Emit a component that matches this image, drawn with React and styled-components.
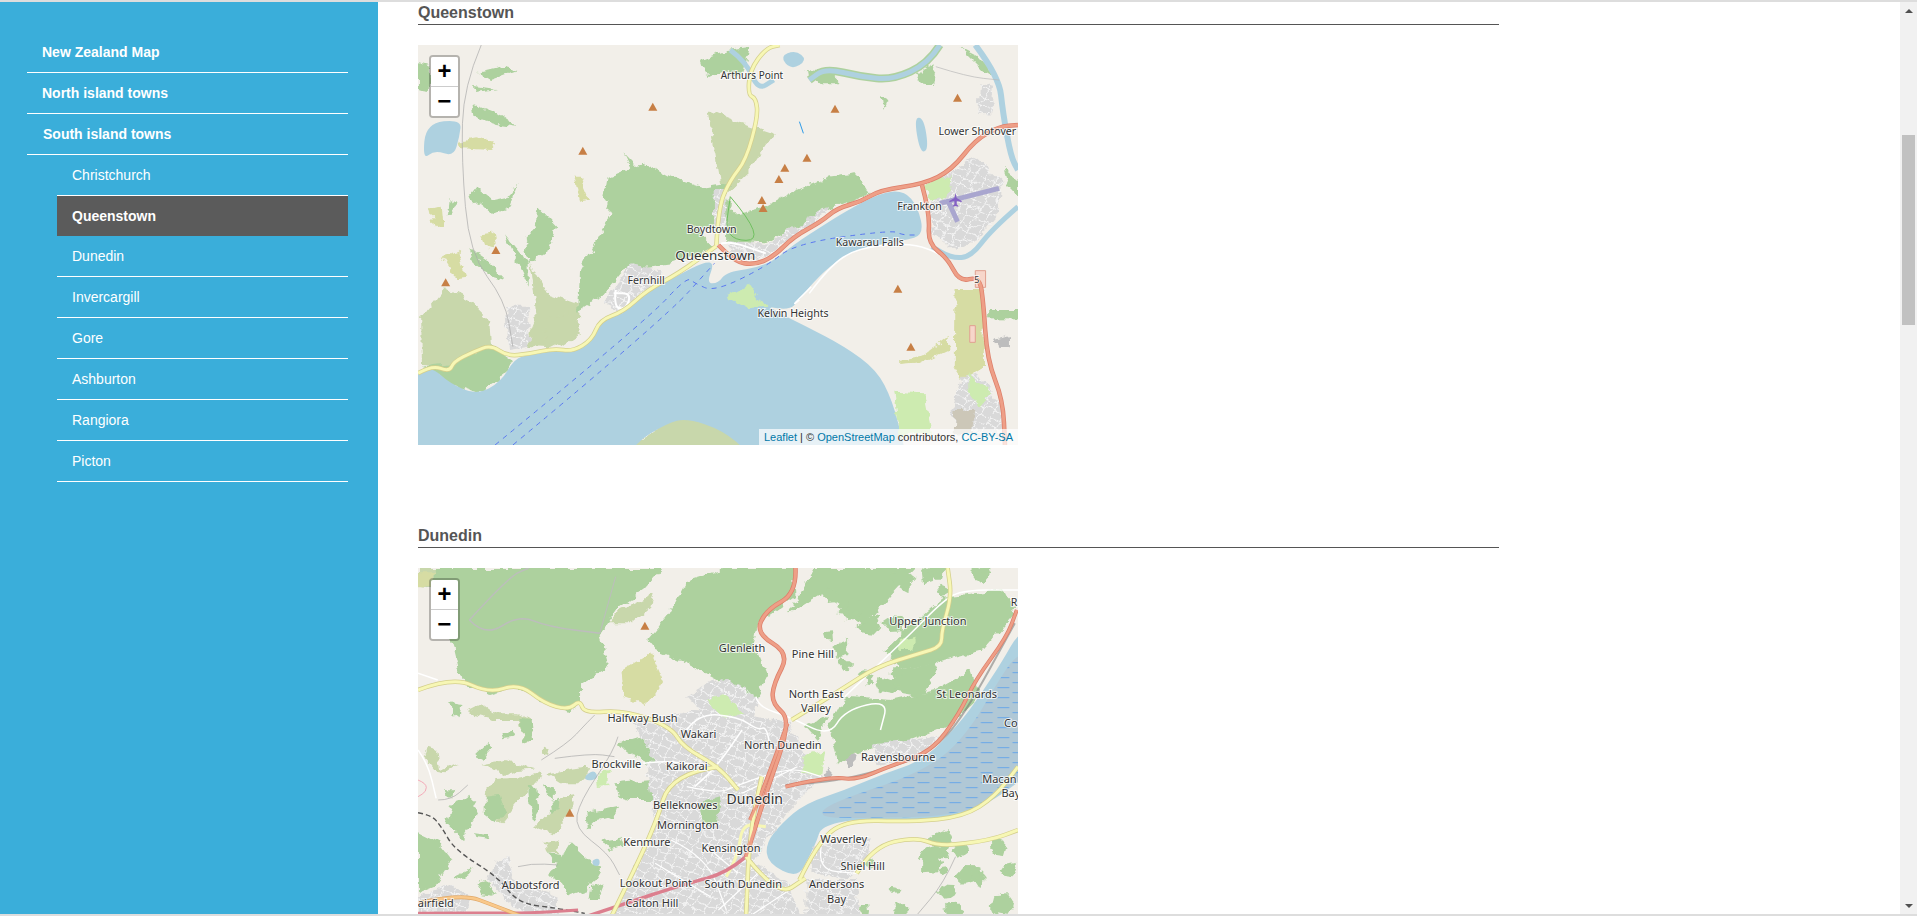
import React from 'react';
import styled, { createGlobalStyle } from 'styled-components';

const GlobalStyle = createGlobalStyle`
    html, body { margin: 0; padding: 0; height: 100%; overflow: hidden; background: #fff; }
    body { font-family: "Liberation Sans", Arial, sans-serif; }
`;

const Page = styled.div`
    display: flex;
    height: 916px;
    box-sizing: border-box;
    border-top: 2px solid #ddd;
    border-bottom: 2px solid #ddd;
    overflow: hidden;
`;

const Sidebar = styled.nav`
    flex: 0 0 378px;
    background: #3aaeda;
    padding: 30px 30px 0 27px;
    box-sizing: border-box;
`;

const SideList = styled.ul`
    list-style: none;
    margin: 0;
    padding: ${p => (p.$sub ? '0 0 0 30px' : '0')};
`;

const SideLink = styled.a`
    display: block;
    height: ${p => (p.$active ? 40 : 41)}px;
    box-sizing: border-box;
    padding-left: ${p => p.$indent || 15}px;
    line-height: 40px;
    font-size: 14px;
    font-weight: ${p => (p.$bold ? 700 : 400)};
    color: #fff;
    background: ${p => (p.$active ? '#5b5b5b' : 'transparent')};
    border-bottom: ${p => (p.$active ? 'none' : '1px solid #fff')};
`;

const Main = styled.main`
    flex: 1;
    min-width: 0;
    padding-left: 40px;
    overflow: hidden;
`;

const Section = styled.section`
    width: 1081px;
    margin-bottom: 80px;
`;

const Title = styled.h2`
    margin: 0 0 20px;
    height: 22px;
    line-height: 21px;
    font-size: 16px;
    font-weight: 700;
    color: #555;
    border-bottom: 1px solid #555;
`;

const MapFrame = styled.div`
    position: relative;
    width: 600px;
    height: 400px;
    overflow: hidden;
    background: #f2efe9;
    svg { position: absolute; left: 0; top: 0; display: block; }
`;

const ZoomBox = styled.div`
    position: absolute;
    left: 11px;
    top: 10px;
    width: 27px;
    border: 2px solid rgba(0, 0, 0, 0.25);
    border-radius: 4px;
    background-clip: padding-box;
`;

const ZoomButton = styled.a`
    display: block;
    height: ${p => (p.$last ? 29 : 30)}px;
    box-sizing: border-box;
    background: #fff;
    color: #000;
    text-align: center;
    font: 700 24px/31px "Liberation Mono", monospace;
    overflow: hidden;
    border-bottom: ${p => (p.$last ? 'none' : '1px solid #ccc')};
    border-radius: ${p => (p.$last ? '0 0 2px 2px' : '2px 2px 0 0')};
`;

const Attribution = styled.div`
    position: absolute;
    right: 0;
    bottom: 0;
    height: 16px;
    padding: 0 5px;
    background: rgba(255, 255, 255, 0.7);
    font-size: 11px;
    line-height: 16px;
    color: #333;
    white-space: nowrap;
    a { color: #0078a8; }
`;

const Scrollbar = styled.div`
    flex: 0 0 17px;
    display: flex;
    flex-direction: column;
    align-items: center;
    background: #f1f1f1;
`;

const ArrowButton = styled.div`
    flex: 0 0 17px;
    display: flex;
    align-items: center;
    justify-content: center;
    margin-top: ${p => (p.$down ? 'auto' : '0')};
    &::before {
        content: "";
        border-left: 4px solid transparent;
        border-right: 4px solid transparent;
        ${p => (p.$down ? 'border-top: 4px solid #505050;' : 'border-bottom: 4px solid #505050;')}
    }
`;

const Thumb = styled.div`
    width: 13px;
    height: 190px;
    margin-top: 116px;
    background: #c1c1c1;
`;

const C = {
    forest: '#add19e',
    scrub: '#c8d7ab',
    tan: '#d6dca3',
    grass: '#cdebb0',
    water: '#aed1e0',
    town: 'url(#streets)',
    road: '#f7f7b5',
    trunk: '#ee9f87',
    trunkDark: '#dd7f6a',
    pink: '#dc7f8e',
};

// crop coordinates of the lower left corner of the Dunedin tile to map units
const cr = str => str.trim().split(/\s+/).map(s => {
    const [x, y] = s.split(',').map(Number);
    return `${Math.round(20 + x * 0.843)},${570 + y}`;
}).join(' ');

// scattered woodland blobs, seeded so every render is the same
function patches(seed, count, x0, y0, x1, y1, fill) {
    let s = seed;
    const rnd = () => {
        s = (s * 16807) % 2147483647;
        return s / 2147483647;
    };
    const out = [];
    for (let i = 0; i < count; i++) {
        const cx = x0 + rnd() * (x1 - x0);
        const cy = y0 + rnd() * (y1 - y0);
        const r = 8 + rnd() * 22;
        const pts = [];
        for (let a = 0; a < 6; a++) {
            const k = 0.6 + rnd() * 0.8;
            const t = (a / 6) * Math.PI * 2;
            pts.push(`${Math.round(cx + Math.cos(t) * r * k)},${Math.round(cy + Math.sin(t) * r * k)}`);
        }
        out.push([fill, pts.join(' ')]);
    }
    return out;
}

function pathFrom(str, closed, curved) {
    const pts = str.trim().split(/\s+/).map(s => s.split(',').map(Number));
    if (closed && !curved) return `M${pts.join(' L')} Z`;
    if (!closed) {
        let d = `M${pts[0]}`;
        for (let i = 1; i < pts.length - 1; i++) {
            const mx = (pts[i][0] + pts[i + 1][0]) / 2;
            const my = (pts[i][1] + pts[i + 1][1]) / 2;
            d += ` Q${pts[i]} ${mx},${my}`;
        }
        return d + ` L${pts[pts.length - 1]}`;
    }
    const n = pts.length;
    const mid = i => [(pts[i % n][0] + pts[(i + 1) % n][0]) / 2, (pts[i % n][1] + pts[(i + 1) % n][1]) / 2];
    let d = `M${mid(0)}`;
    for (let i = 1; i <= n; i++) d += ` Q${pts[i % n]} ${mid(i)}`;
    return d + ' Z';
}

const queenstown = {
    box: [20, 135],
    areas: [
        [C.tan, '1380,870 1450,870 1452,1100 1400,1140 1378,1100'],
        [C.scrub, '30,1095 28,950 90,862 150,900 200,960 205,1040 240,1060 100,1100'],
        [C.scrub, '305,790 345,880 430,915 425,1000 350,1045 290,1040 320,950'],
        [C.tan, '80,770 125,755 145,830 115,835'],
        [C.tan, '182,700 210,695 218,745 195,740'],
        [C.tan, '50,625 80,620 85,680 62,685'],
        [C.tan, '415,530 430,530 455,600 430,605'],
        [C.tan, '125,425 170,415 215,430 205,450 130,445'],
        [C.tan, '1240,1080 1300,1065 1360,1010 1362,1050 1290,1090 1240,1095'],
        [C.scrub, '755,330 830,365 920,400 860,510 790,590 770,450'],
        [C.scrub, '345,950 400,940 430,1000 380,1040 340,1010'],
        [C.scrub, '500,1400 650,1262 700,1248 810,1285 900,1400'],
        [C.forest, '540,460 585,570 640,610 680,680 770,680 780,590 812,545 740,560 660,530 590,485 500,530 490,600 510,640 480,700 430,810 425,935 490,885 540,810 660,790 770,745'],
        [C.forest, '795,590 830,640 900,620 960,580 1060,530 1130,520 1160,580 1100,610 1040,640 960,690 900,730 800,725'],
        [C.forest, '150,590 170,560 210,600 250,590 272,548 250,625 210,645 170,610'],
        [C.forest, '325,620 372,680 350,750 300,790 290,720 320,680'],
        [C.forest, '240,700 300,790 300,860 270,780'],
        [C.forest, '150,750 200,790 240,840 210,830 160,790'],
        [C.forest, '155,310 220,340 270,380 220,372 160,350'],
        [C.forest, '170,220 240,200 272,210 200,240'],
        [C.forest, '160,258 220,268 160,276'],
        [C.forest, '735,180 800,150 860,140 840,232 790,210 750,232'],
        [C.forest, '20,190 50,200 50,270 20,265'],
        [C.forest, '100,600 120,610 95,650'],
        [C.forest, '1195,290 1210,300 1200,330'],
        [C.forest, '1500,500 1538,540 1538,590 1515,560'],
        [C.forest, '1460,930 1538,930 1538,955 1460,955'],
        [C.forest, '1000,210 1060,215 1090,250 1040,250'],
        [C.forest, '1280,220 1330,190 1320,255 1295,250'],
        [C.forest, '1390,140 1440,170 1490,240 1450,210'],
        [C.forest, '30,1100 100,1150 170,1180 230,1140 260,1080 205,1035 160,1060 110,1090 60,1095'],
        [C.water, '-100,1130 20,1125 55,1100 100,1150 170,1185 230,1145 265,1075 300,1065 365,1050 410,1060 460,1025 480,965 540,940 600,875 680,825 745,785 770,790 750,850 780,850 800,815 900,800 975,730 1040,680 1100,635 1190,578 1250,572 1285,620 1300,705 1250,722 1130,745 1060,800 1010,860 985,900 960,930 900,920 800,890 860,850 900,920 1000,978 1100,1040 1180,1110 1220,1200 1250,1340 1270,1450 870,1450 860,1360 790,1290 700,1255 650,1270 560,1335 530,1450 -100,1450'],
        [C.grass, '800,890 860,850 900,920 850,925'],
        [C.water, '32,480 40,370 130,358 125,410 110,470 62,450'],
        [C.water, '1275,352 1300,355 1312,450 1290,458'],
        [C.water, '935,170 975,150 1005,180 965,210'],
        [C.town, '768,570 800,570 800,700 770,700'],
        [C.town, '490,910 560,790 600,800 640,815 600,860 540,935'],
        [C.town, '800,720 900,735 1000,660 1060,620 1055,640 980,700 900,775 820,780'],
        [C.town, '1310,560 1430,470 1500,550 1490,640 1430,720 1380,750 1320,700'],
        [C.town, '1440,250 1480,260 1470,340 1435,345'],
        [C.town, '240,920 300,920 300,1040 250,1050'],
        [C.town, '1400,1130 1440,1120 1500,1230 1490,1320 1380,1300 1370,1230'],
        [C.grass, '1305,550 1370,525 1365,590 1315,600'],
        [C.grass, '1225,1175 1300,1180 1320,1300 1240,1310'],
        [C.grass, '1410,1120 1470,1180 1440,1220 1410,1170'],
        ['#ccc7b8', '1380,1230 1430,1230 1420,1295 1375,1300'],
        ['#bdbdbd', '1480,1020 1515,1008 1515,1042 1490,1040'],
    ],
    lines: [
        { c: C.forest, w: 8, p: '1340,135 1312,190 1220,240 1140,230 1050,205 1010,240' },
        { c: C.water, w: 5, p: '1340,135 1312,190 1220,240 1140,230 1050,205 1010,240' },
        { c: C.water, w: 6, p: '1430,135 1490,230 1500,340 1520,470 1538,510' },
        { c: C.water, w: 5, p: '1538,620 1470,690 1420,770 1370,775 1320,740' },
        { c: C.water, w: 5, p: '810,150 850,185 880,270 920,240' },
        { c: '#fff', w: 1.5, p: '1010,880 1060,800 1130,745 1250,730 1310,745 1350,770' },
        { c: '#fff', w: 2, p: '520,870 515,920 545,930 560,880 515,880' },
        { c: '#fff', w: 1.5, p: '985,900 960,925 1015,860' },
        { c: '#fff', w: 2, p: '780,735 800,720 900,760' },
        { c: '#aaa', w: 0.7, p: '180,135 135,260 130,480 150,760 240,900 260,1040' },
        { c: '#b9b9b9', w: 0.7, p: '1330,200 1410,230 1490,240' },
        { c: '#a9a6cf', w: 5, p: '1340,610 1490,565' },
        { c: '#a9a6cf', w: 5, p: '1360,600 1385,665' },
        { c: '#70c060', w: 1, p: '810,590 905,722 795,720 810,590' },
        { c: '#2e9be8', w: 1, p: '985,365 995,400' },
        { c: C.road, w: 3.5, casing: '#d4cf8c', p: '20,1120 55,1095 100,1115 110,1085 160,1055 205,1035 245,1068 300,1062 365,1045 410,1055 460,1020 480,960 540,935 600,870 680,820 775,738' },
        { c: C.road, w: 3.5, casing: '#d4cf8c', p: '775,735 780,620 810,540 850,480 880,350 875,295 855,285 860,210 900,145 935,135' },
        { c: C.trunk, w: 3.5, casing: C.trunkDark, p: '780,735 820,785 870,795 920,770 970,710 1040,665 1080,625 1140,605 1190,570 1300,552 1370,510 1430,420 1490,380 1538,375' },
        { c: C.trunk, w: 3.5, casing: C.trunkDark, p: '1295,555 1315,640 1310,730 1360,775 1390,845 1440,830 1450,900 1460,1080 1500,1200 1505,1335' },
        { c: '#5a78f0', w: 1, dash: '5 5', p: '215,1335 600,960 700,830 720,850 770,875 900,800 975,730 1220,690 1245,705 1285,705' },
        { c: '#5a78f0', w: 1, dash: '5 5', p: '260,1335 640,960 770,790' },
    ],
    rects: [
        ['#f7d6ca', 1430, 812, 26, 50],
        ['#f7d6ca', 1416, 977, 14, 50],
    ],
    peaks: ['614,320', '1075,326', '1385,293', '437,452', '1004,473', '948,503', '933,537', '890,600', '893,624', '217,750', '90,847', '1234,866', '1267,1040'],
    plane: '1380,600',
    labels: [
        ['Arthurs Point', 865, 227, 10],
        ['Lower Shotover', 1435, 394],
        ['Boydtown', 763, 688],
        ['Queenstown', 772, 766, 13.4],
        ['Fernhill', 597, 842],
        ['Frankton', 1289, 620],
        ['Kawarau Falls', 1163, 728],
        ['Kelvin Heights', 969, 941],
        ['5', 1434, 838, 9],
    ],
};

const dunedin = {
    box: [20, 174],
    areas: [
        [C.scrub, '20,174 130,174 60,240 20,230'],
        [C.tan, '20,190 60,190 50,230 20,232'],
        [C.forest, '60,174 300,174 640,174 590,240 520,300 480,370 505,470 430,520 430,585 400,605 320,570 270,530 200,555 130,510 112,420 60,240'],
        [C.scrub, '530,300 620,250 610,290 560,340 500,340'],
        [C.tan, '535,480 610,430 640,510 600,585 540,560'],
        [C.forest, '700,210 800,174 970,174 975,260 880,340 870,400 905,500 880,560 780,510 700,460 620,420 600,390 650,320'],
        [C.forest, '1020,174 1280,174 1220,250 1150,350 1100,300 1040,250 960,310'],
        [C.forest, '1350,260 1500,240 1530,310 1450,420 1350,450 1240,480 1200,420 1260,350'],
        [C.forest, '1100,560 1220,570 1330,540 1420,480 1440,560 1370,640 1270,690 1150,720 1080,760 1060,650'],
        [C.forest, '1240,480 1340,450 1300,560 1200,540'],
        [C.forest, cr('600,130 700,100 760,170 700,200 620,150')],
        [C.forest, cr('590,250 700,240 730,260 690,300 630,300 600,290')],
        [C.scrub, cr('200,280 230,240 310,235 370,215 360,240 290,320 250,370 200,330')],
        [C.forest, cr('200,290 245,285 262,340 240,370 200,340')],
        [C.forest, cr('330,260 355,265 365,330 345,365 335,310')],
        [C.forest, cr('105,310 160,290 180,340 130,420 105,390 85,370')],
        [C.scrub, cr('355,380 440,290 470,285 465,320 430,370 410,400 370,390')],
        [C.forest, cr('400,520 455,430 510,480 550,500 510,570 450,590 420,540')],
        [C.forest, cr('555,420 610,410 620,440 570,450')],
        [C.forest, cr('505,340 600,320 590,350 530,365 510,385')],
        [C.scrub, cr('20,170 30,140 60,150 70,210 120,190 80,220 55,215')],
        [C.scrub, cr('150,30 190,10 230,40 300,40 340,60 345,120 320,130 300,60 230,60 170,45')],
        [C.forest, cr('300,50 340,60 345,120 320,130')],
        [C.scrub, cr('180,195 260,180 350,205 300,210 260,225 220,200')],
        [C.scrub, cr('390,225 440,210 500,200 520,210 480,250 430,250')],
        [C.forest, cr('0,400 60,430 100,480 50,560 0,580')],
        [C.forest, cr('100,10 130,15 125,55 105,40')],
        [C.forest, cr('250,100 285,95 280,110 255,115')],
        [C.forest, cr('170,170 215,125 220,145 190,180')],
        [C.scrub, cr('375,140 395,145 390,165 375,160')],
        [C.forest, cr('75,265 105,265 100,290 85,285')],
        [C.scrub, cr('380,425 425,420 420,460 390,460')],
        [C.forest, cr('375,250 405,265 405,295 385,285')],
        [C.forest, cr('395,300 430,290 425,330 400,335')],
        [C.forest, cr('170,400 210,405 215,420 175,415')],
        [C.forest, cr('110,530 165,505 150,525 125,540')],
        [C.forest, cr('170,550 205,540 230,590 190,585')],
        [C.forest, cr('390,460 430,465 430,490 405,485')],
        [C.forest, cr('520,560 560,550 540,600 515,600')],
        ...patches(7, 22, 1150, 990, 1538, 1218, C.forest),
        ...patches(11, 12, 1060, 240, 1240, 540, C.forest),
        ...patches(19, 10, 1240, 170, 1500, 250, C.forest),
        [C.water, '1600,340 1538,370 1500,450 1440,560 1390,640 1300,750 1200,790 1100,840 1000,880 940,940 900,1000 905,1060 980,1105 1010,1040 1030,990 1040,950 1130,925 1270,935 1380,925 1480,870 1600,760'],
        ['url(#mud)', '1032,922 1060,880 1290,790 1400,690 1500,490 1538,430 1600,430 1600,760 1480,862 1380,918 1130,925'],
        [C.town, '560,640 720,600 880,620 960,640 1010,760 1040,800 960,900 900,1000 870,1060 950,1110 1000,1240 500,1240 620,950 600,800 600,700'],
        [C.town, '1020,1010 1160,985 1150,1060 1100,1110 1015,1085'],
        [C.town, '1000,1110 1130,1110 1140,1230 1000,1230'],
        [C.town, cr('230,490 270,470 290,540 420,590 420,650 330,650 260,600 210,540')],
        [C.town, cr('0,590 100,550 160,600 140,650 0,650')],
        [C.town, '700,560 790,500 880,560 870,620 740,610'],
        [C.town, '1170,700 1340,680 1300,730 1180,770'],
        [C.grass, '750,565 800,550 840,610 790,625'],
        [C.grass, '995,740 1050,720 1040,790 995,790'],
        [C.grass, '1240,390 1280,380 1270,420 1240,420'],
        [C.grass, cr('535,225 575,215 570,255 540,258')],
        [C.forest, '620,760 590,700 560,720 580,750'],
        [C.forest, '730,880 790,860 770,950 740,940'],
        [C.forest, '1000,650 1060,620 1030,690'],
        ['#bdbdbd', '1040,800 1060,770 1075,790 1060,810'],
        ['#bdbdbd', '1105,740 1130,735 1125,770 1108,775'],
        [C.water, cr('497,232 528,208 542,235 510,243')],
        [C.water, cr('522,480 545,474 546,498 525,498')],
    ],
    lines: [
        { c: '#bdbdbd', w: 1.5, p: '150,330 250,200 300,174' },
        { c: '#bdbdbd', w: 1.5, p: '150,330 190,380 275,315 350,350 480,370' },
        { c: '#bdbdbd', w: 1, p: '480,370 520,200' },
        { c: '#fff', w: 1.5, p: '20,490 70,510' },
        { c: '#aaa', w: 0.7, p: cr('600,110 590,150 485,305 470,385 570,460 605,525') },
        { c: '#aaa', w: 0.7, p: cr('370,180 450,130 500,75 530,45') },
        { c: '#aaa', w: 0.7, p: cr('410,175 520,160 590,170') },
        { c: '#aaa', w: 0.7, p: cr('60,300 100,300 150,255') },
        { c: '#aaa', w: 0.7, p: cr('300,500 340,490 420,495') },
        { c: '#fff', w: 1.5, p: cr('0,150 30,190 55,295') },
        { c: '#f4aab8', w: 1, p: cr('0,240 25,250 25,275 0,290') },
        { c: '#aaa', w: 0.7, p: '1380,1040 1350,1120 1280,1218' },
        { c: '#fff', w: 1.5, p: '700,660 730,610 830,620 880,660 900,650 910,700' },
        { c: '#fff', w: 1.5, p: '875,560 880,590 960,620 1060,680 1100,600 1210,570 1190,660' },
        { c: '#fff', w: 1.5, p: '1100,560 1260,380 1350,270 1400,240 1538,240' },
        { c: '#fff', w: 1.5, p: '720,830 770,780 840,660' },
        { c: '#fff', w: 1.5, p: '590,760 640,750 760,770' },
        { c: '#fff', w: 1.2, p: '700,830 780,850 820,830 960,770 1040,800' },
        { c: '#fff', w: 1.2, p: '840,850 980,770' },
        { c: '#fff', w: 1.2, p: '740,1000 830,1090' },
        { c: '#fff', w: 1.2, p: '660,990 750,1040 800,1200' },
        { c: '#fff', w: 1.2, p: '620,1060 760,1160' },
        { c: '#fff', w: 1.2, p: '880,1090 780,1200' },
        { c: '#fff', w: 1.2, p: '960,1140 860,1218' },
        { c: '#fff', w: 1.2, p: '1040,1010 1030,1080 1130,1090' },
        { c: '#70707088', w: 2, p: '950,825 1060,818 1210,775 1320,725 1400,620 1530,340' },
        { c: C.road, w: 3.5, casing: '#d4cf8c', p: '20,540 110,500 200,550 275,520 340,580 400,600 430,570 440,610 540,600 660,650 690,710 780,770 830,840' },
        { c: C.road, w: 3.5, casing: '#d4cf8c', p: '780,770 660,790 620,950 510,1218' },
        { c: C.road, w: 3.5, casing: '#d4cf8c', p: '965,630 1090,540 1180,470 1290,430 1345,410 1345,360 1370,260 1360,174' },
        { c: C.road, w: 3.5, casing: '#d4cf8c', p: '985,1110 1030,1000 1100,930 1270,935 1400,920 1480,860 1538,770' },
        { c: C.road, w: 3.5, casing: '#d4cf8c', p: '1130,1090 1170,1010 1280,980 1340,1010 1470,990 1538,960' },
        { c: C.road, w: 3.5, casing: '#d4cf8c', p: '850,1040 930,1160 1000,1105' },
        { c: C.road, w: 3.5, casing: '#d4cf8c', p: '890,800 860,940 850,1218' },
        { c: C.road, w: 3, p: '800,1100 830,1040 840,940 900,950' },
        { c: '#f9c88a', w: 3, casing: '#e0a868', p: '20,1180 130,1150 220,1190 280,1218' },
        { c: C.trunk, w: 3.5, casing: C.trunkDark, p: '975,174 978,250 900,300 875,370 960,430 920,520 915,580 965,630 900,850 850,1040' },
        { c: C.trunk, w: 3, casing: C.trunkDark, p: '955,640 890,850 860,930' },
        { c: C.pink, w: 3.5, p: '850,1040 800,1090 700,1120 520,1190 450,1218' },
        { c: C.trunk, w: 3, casing: C.trunkDark, p: '950,830 1060,800 1130,810 1210,770 1320,725 1390,610 1430,510 1510,380 1535,300' },
        { c: '#555', w: 1.4, dash: '5 3', p: cr('0,338 40,345 70,380 110,450 240,530 300,610 420,625 500,640') },
        { c: C.pink, w: 3, p: cr('0,640 120,638 320,640 480,630') },
    ],
    rects: [],
    peaks: ['594,347', '404,908'],
    labels: [
        ['R', 1528, 278],
        ['Upper Junction', 1310, 334, 11],
        ['Glenleith', 840, 415, 11],
        ['Pine Hill', 1019, 431, 11],
        ['North East', 1027, 552, 11],
        ['St Leonards', 1408, 552, 11],
        ['Valley', 1027, 595, 11],
        ['Halfway Bush', 588, 623, 11],
        ['Co', 1520, 640, 11],
        ['Wakari', 730, 671, 11],
        ['North Dunedin', 943, 705, 11],
        ['Ravensbourne', 1235, 740, 11],
        ['Brockville', 522, 762, 11],
        ['Kaikorai', 700, 769, 11],
        ['Macan', 1491, 808, 11],
        ['Bay', 1520, 850, 11],
        ['Dunedin', 872, 868, 14],
        ['Belleknowes', 696, 884, 11],
        ['Mornington', 703, 946, 11],
        ['Waverley', 1097, 986, 11],
        ['Kenmure', 599, 997, 11],
        ['Kensington', 812, 1014, 11],
        ['Shiel Hill', 1145, 1069, 11],
        ['Abbotsford', 305, 1125, 11],
        ['Lookout Point', 622, 1120, 11],
        ['South Dunedin', 843, 1121, 11],
        ['Andersons', 1079, 1123, 11],
        ['Bay', 1079, 1166, 11],
        ['Calton Hill', 612, 1178, 11],
        ['airfield', 65, 1180, 11],
    ],
};

const SX = 600 / 1518;
const SY = 1 / 3;
const SMOOTH_FILLS = [C.water, 'url(#mud)'];

function TileMap({ data }) {
    const [bx, by] = data.box;
    const px = (x, y) => [(x - bx) * SX, (y - by) * SY];
    const casings = data.lines.filter(l => l.casing);
    return (
        <>
            <svg width="600" height="400" viewBox={`${bx} ${by} 1518 1200`} preserveAspectRatio="none">
                <defs>
                    <pattern id="mud" width="80" height="30" patternUnits="userSpaceOnUse">
                        <rect width="80" height="30" fill="#b0c8d6" />
                        <path d="M4 8h30M46 23h30" stroke="#4f9cf0" strokeWidth="2" />
                    </pattern>
                    <pattern id="streets" width="26" height="24" patternUnits="userSpaceOnUse" patternTransform="rotate(25)">
                        <rect width="26" height="24" fill="#d9d9d9" />
                        <path d="M0 12h26M13 0v24" stroke="#f4f4f4" strokeWidth="2.5" />
                    </pattern>
                    <filter id="rough" x="-0.3" y="-0.3" width="1.6" height="1.6">
                        <feTurbulence type="fractalNoise" baseFrequency="0.035" numOctaves="3" seed="4" />
                        <feDisplacementMap in="SourceGraphic" scale="26" xChannelSelector="R" yChannelSelector="G" />
                    </filter>
                </defs>
                {data.areas.map(([fill, pts], i) => {
                    const calm = SMOOTH_FILLS.includes(fill);
                    return <path key={i} d={pathFrom(pts, true, calm)} fill={fill} filter={calm ? undefined : 'url(#rough)'} />;
                })}
                {data.rects.map(([fill, x, y, w, h], i) => (
                    <rect key={i} x={x} y={y} width={w} height={h} fill={fill} stroke="#e0a090" vectorEffect="non-scaling-stroke" />
                ))}
                {data.lines.map((l, i) => !l.casing && (
                    <path key={i} d={pathFrom(l.p)} fill="none" stroke={l.c} strokeWidth={l.w} strokeDasharray={l.dash} vectorEffect="non-scaling-stroke" />
                ))}
                {casings.map((l, i) => (
                    <path key={i} d={pathFrom(l.p)} fill="none" stroke={l.casing} strokeWidth={l.w + 1} vectorEffect="non-scaling-stroke" />
                ))}
                {casings.map((l, i) => (
                    <path key={i} d={pathFrom(l.p)} fill="none" stroke={l.c} strokeWidth={l.w - 0.5} vectorEffect="non-scaling-stroke" />
                ))}
            </svg>
            <svg width="600" height="400" viewBox="0 0 600 400">
                {data.peaks.map(s => {
                    const [x, y] = px(...s.split(',').map(Number));
                    return <path key={s} d={`M${x} ${y - 4}l4.5 8h-9z`} fill="#c77f45" />;
                })}
                {data.plane && (() => {
                    const [x, y] = px(...data.plane.split(',').map(Number));
                    return <path d={`M${x} ${y - 7}l1.2 5 5 3v1.3l-5-1.5v3.5l1.5 1.5v1l-2.7-.8-2.7.8v-1l1.5-1.5v-3.5l-5 1.5v-1.3l5-3z`} fill="#8461c4" />;
                })()}
                {data.labels.map(([text, x, y, size], i) => {
                    const [lx, ly] = px(x, y);
                    const fs = size || 10.6;
                    return (
                        <text
                            key={i}
                            x={lx}
                            y={ly + fs * 0.36}
                            textAnchor="middle"
                            fontFamily="Noto Sans, sans-serif"
                            fontSize={fs}
                            fill="#333"
                            stroke="#fff"
                            strokeOpacity="0.75"
                            strokeWidth="2"
                            paintOrder="stroke"
                        >
                            {text}
                        </text>
                    );
                })}
            </svg>
        </>
    );
}

const topLinks = ['New Zealand Map', 'North island towns', 'South island towns'];
const towns = ['Christchurch', 'Queenstown', 'Dunedin', 'Invercargill', 'Gore', 'Ashburton', 'Rangiora', 'Picton'];

function MapSection({ title, data }) {
    return (
        <Section>
            <Title>{title}</Title>
            <MapFrame>
                <TileMap data={data} />
                <ZoomBox>
                    <ZoomButton>+</ZoomButton>
                    <ZoomButton $last>−</ZoomButton>
                </ZoomBox>
                <Attribution>
                    <a>Leaflet</a> | © <a>OpenStreetMap</a> contributors, <a>CC-BY-SA</a>
                </Attribution>
            </MapFrame>
        </Section>
    );
}

export default function App() {
    return (
        <Page>
            <GlobalStyle />
            <Sidebar>
                <SideList>
                    {topLinks.map(t => <li key={t}><SideLink $bold $indent={t.startsWith('South') ? 16 : 15}>{t}</SideLink></li>)}
                </SideList>
                <SideList $sub>
                    {towns.map(t => (
                        <li key={t}><SideLink $bold={t === 'Queenstown'} $active={t === 'Queenstown'}>{t}</SideLink></li>
                    ))}
                </SideList>
            </Sidebar>
            <Main>
                <MapSection title="Queenstown" data={queenstown} />
                <MapSection title="Dunedin" data={dunedin} />
            </Main>
            <Scrollbar>
                <ArrowButton />
                <Thumb />
                <ArrowButton $down />
            </Scrollbar>
        </Page>
    );
}
